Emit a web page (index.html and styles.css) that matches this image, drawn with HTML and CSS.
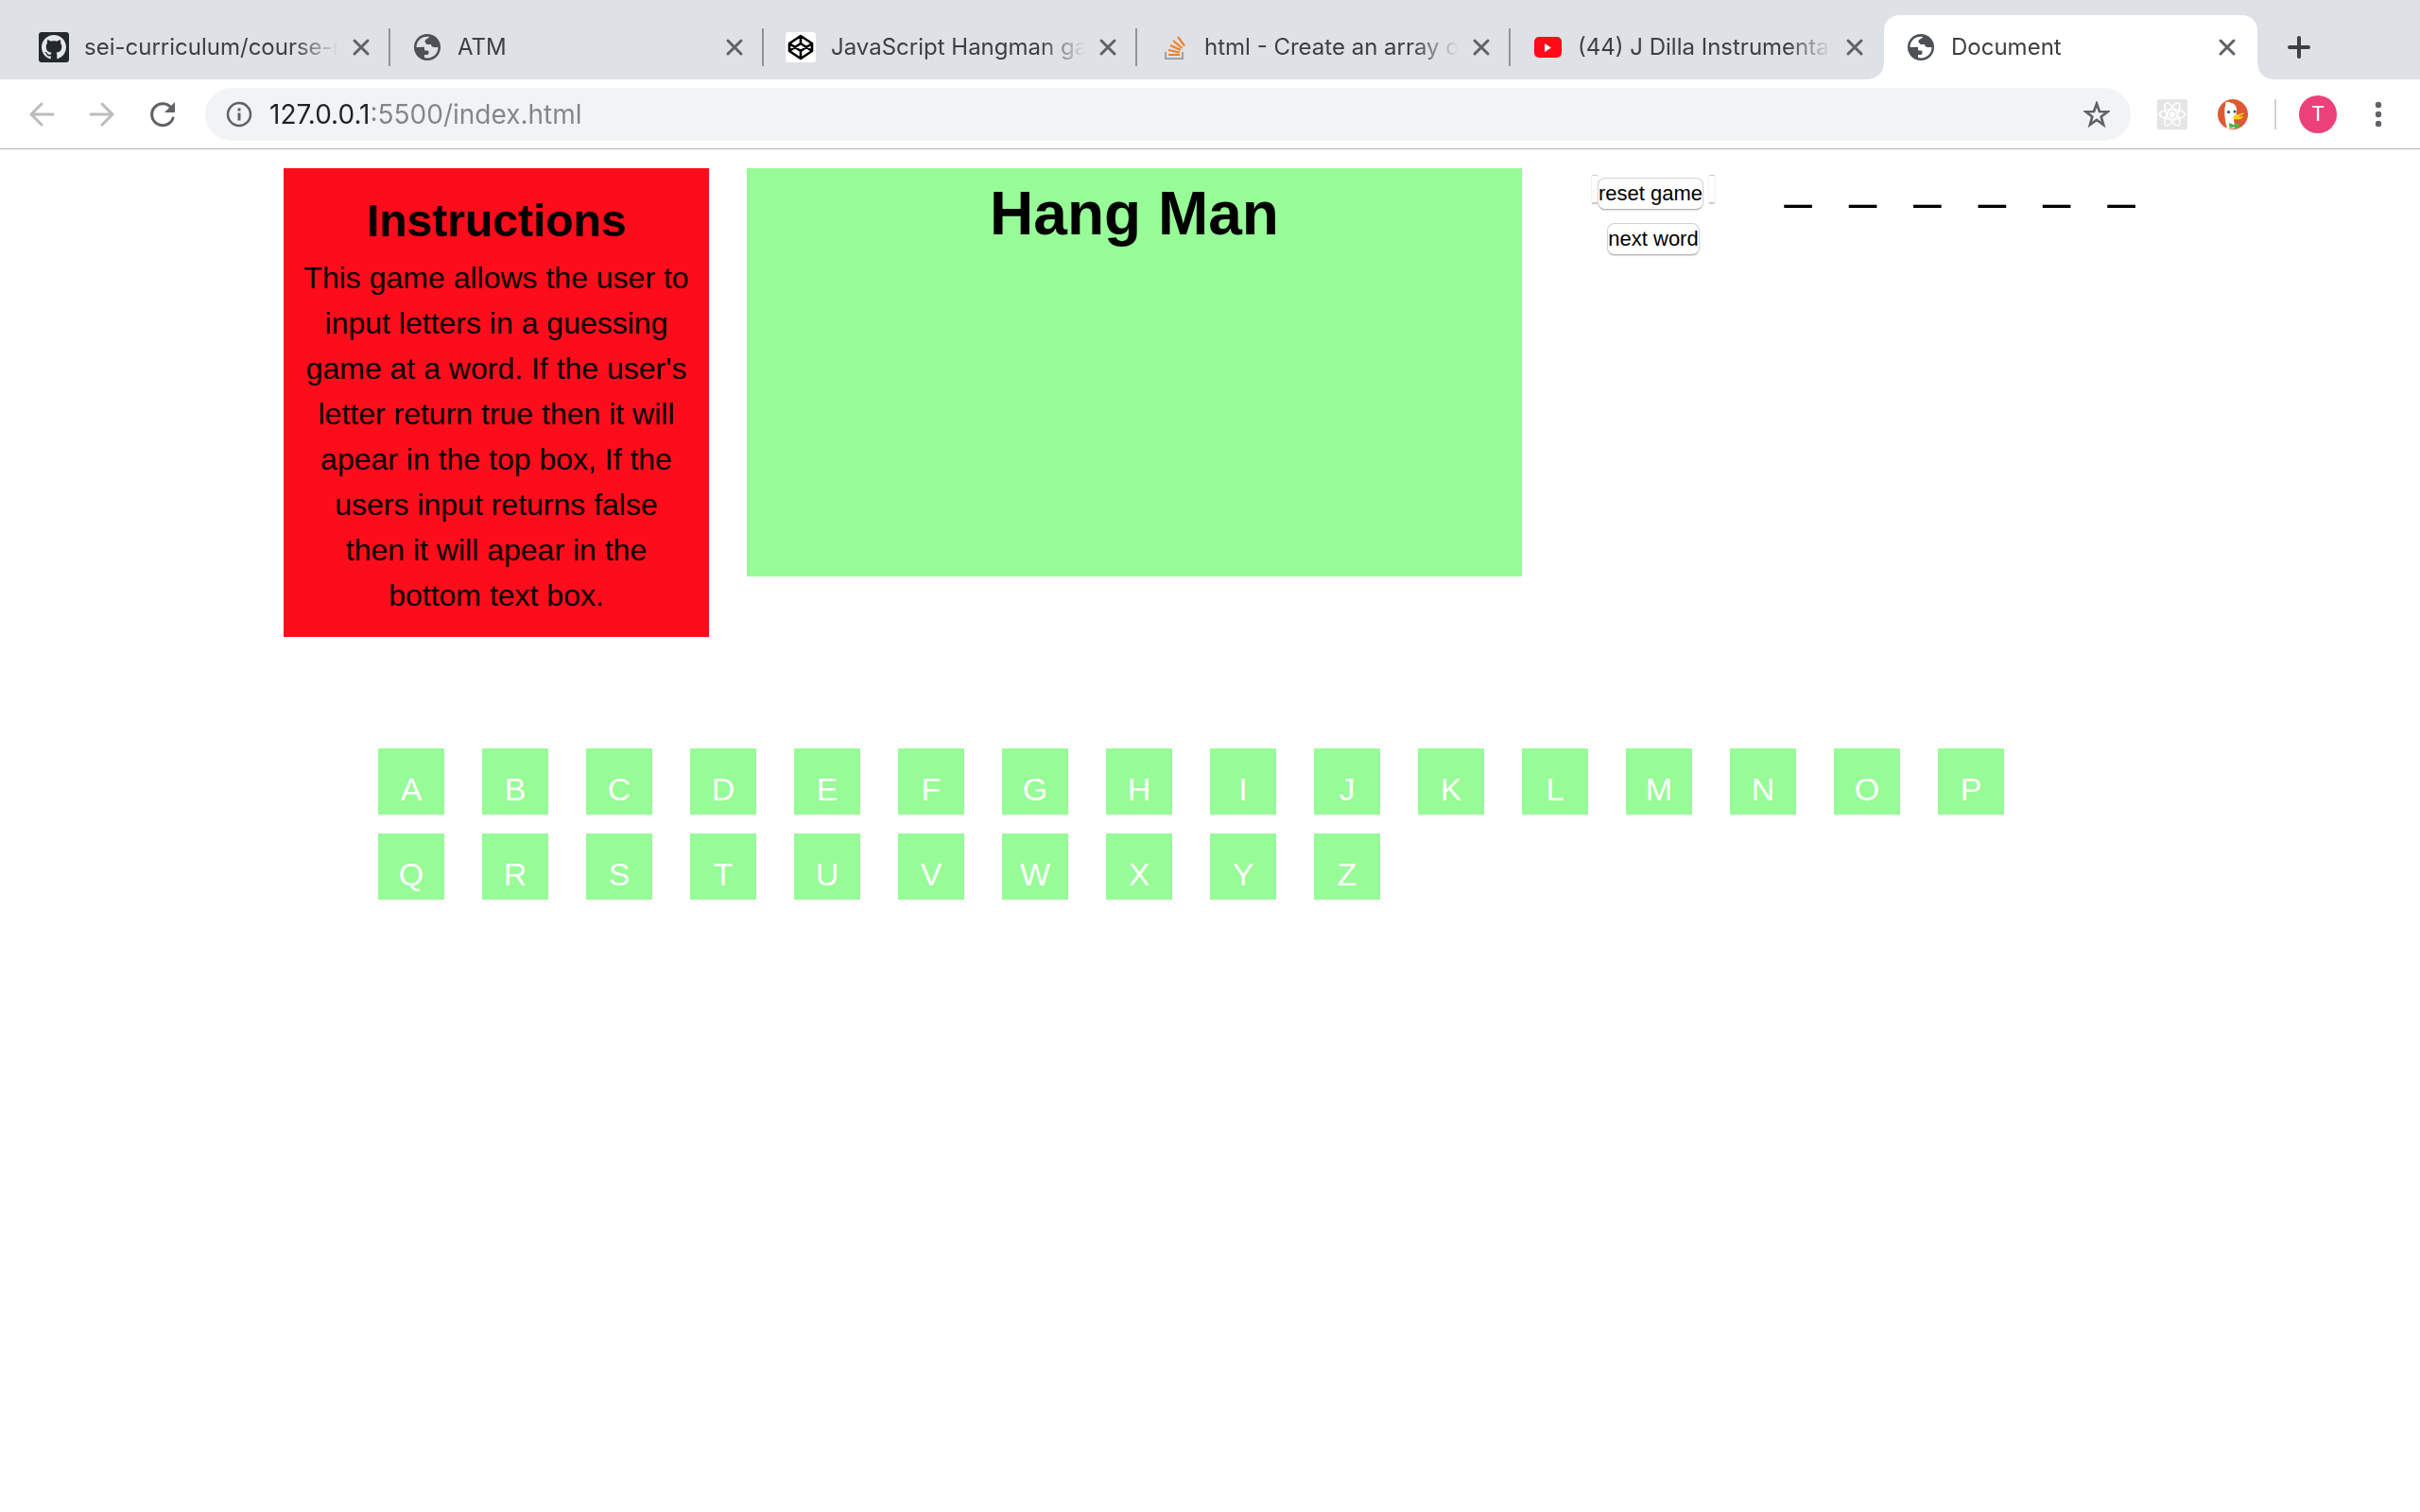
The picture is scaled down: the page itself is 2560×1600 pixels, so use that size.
FILE: index.html
```html
<!DOCTYPE html>
<html lang="en">
<head>
<meta charset="utf-8">
<title>Document</title>
<link rel="stylesheet" href="styles.css">
</head>
<body>
<svg class="defs" aria-hidden="true">
  <symbol id="close" viewBox="0 0 24 24"><path d="M5 5l14 14M19 5L5 19" fill="none" stroke="currentColor" stroke-width="3" stroke-linecap="round"/></symbol>
  <symbol id="globe" viewBox="0 0 32 32">
    <circle cx="16" cy="16" r="14" fill="#4d5156"/>
    <path class="land" d="M4.500 16C4.500 9.500 9.500 4.700 16 4.700h2C18 7 14 7 13.500 9.500c-.3 2 1.500 1.800 2 3.500h4.500c0 2 1.500 3 3.500 3h4c0 6.500-5 11.500-11.500 11.500-1 0-2-.1-3-.4V24h2.500c2 0 2-1.500 2-4-1.500-.6-3-.8-4.500-.8V15.800z"/>
  </symbol>
</svg>
<header class="browser">
  <nav class="tabs" aria-label="Tabs">
    <div class="tab">
      <svg class="icon" viewBox="0 0 32 32"><rect width="32" height="32" rx="3" fill="#24292e"/><g transform="translate(3 3) scale(1.625)"><path fill="#e6e7e9" d="M8 0C3.580 0 0 3.580 0 8c0 3.540 2.290 6.530 5.470 7.590.4.070.55-.17.55-.38 0-.19-.01-.82-.01-1.490-2.010.37-2.530-.49-2.690-.94-.09-.23-.48-.94-.82-1.130-.28-.15-.68-.52-.01-.53.63-.01 1.080.58 1.230.82.72 1.210 1.870.87 2.330.66.070-.52.28-.87.51-1.070-1.780-.2-3.640-.89-3.640-3.950 0-.87.31-1.590.82-2.150-.08-.2-.36-1.020.08-2.120 0 0 .67-.21 2.200.82.64-.18 1.320-.27 2-.27s1.360.09 2 .27c1.530-1.040 2.200-.82 2.200-.82.44 1.100.16 1.920.08 2.120.51.56.82 1.270.82 2.150 0 3.070-1.870 3.750-3.650 3.950.29.25.54.73.54 1.480 0 1.070-.01 1.930-.01 2.200 0 .21.15.46.55.38A8.010 8.010 0 0 0 16 8c0-4.420-3.580-8-8-8z"/></g></svg>
      <span class="title">sei-curriculum/course-materials</span>
      <button class="close" aria-label="Close tab"><svg><use href="#close"/></svg></button>
    </div>
    <div class="tab">
      <svg class="icon"><use href="#globe"/></svg>
      <span class="title">ATM</span>
      <button class="close" aria-label="Close tab"><svg><use href="#close"/></svg></button>
    </div>
    <div class="tab">
      <svg class="icon" viewBox="0 0 32 32"><rect width="32" height="32" rx="3" fill="#fff"/><path fill="none" stroke="#000" stroke-width="2.600" stroke-linejoin="round" d="M16 4L28 12v8L16 28 4 20v-8zM16 4v8M16 20v8M4 12l12 8 12-8M4 20l12-8 12 8"/></svg>
      <span class="title">JavaScript Hangman game</span>
      <button class="close" aria-label="Close tab"><svg><use href="#close"/></svg></button>
    </div>
    <div class="tab">
      <svg class="icon" viewBox="0 0 32 32"><path d="M7 21v7h18v-7" fill="none" stroke="#9fa3a8" stroke-width="2"/><path d="M10 24h12M10 19l12 2.500M12 14l11 5M15 9l9.500 8M20 5l7 9.500" fill="none" stroke="#f48024" stroke-width="2.200"/></svg>
      <span class="title">html - Create an array of buttons</span>
      <button class="close" aria-label="Close tab"><svg><use href="#close"/></svg></button>
    </div>
    <div class="tab">
      <svg class="icon" viewBox="0 0 32 32"><rect x="2" y="5" width="29" height="22" rx="5" fill="#ff0a17"/><path d="M13 12v9l7-4.500z" fill="#fff"/></svg>
      <span class="title">(44) J Dilla Instrumentals</span>
      <button class="close" aria-label="Close tab"><svg><use href="#close"/></svg></button>
    </div>
    <div class="tab active">
      <svg class="icon"><use href="#globe"/></svg>
      <span class="title">Document</span>
      <button class="close" aria-label="Close tab"><svg><use href="#close"/></svg></button>
    </div>
    <button class="new-tab" aria-label="New tab"><svg viewBox="0 0 28 28"><path d="M14 4v20M4 14h20" fill="none" stroke="#3c4043" stroke-width="4" stroke-linecap="round"/></svg></button>
  </nav>
  <div class="toolbar">
    <button class="tool dim" aria-label="Back"><svg viewBox="0 0 32 32"><path d="M28 16H5M16 5L5 16l11 11"/></svg></button>
    <button class="tool dim" aria-label="Forward"><svg viewBox="0 0 32 32"><path d="M4 16h23M16 5l11 11-11 11"/></svg></button>
    <button class="tool" aria-label="Reload"><svg viewBox="0 0 32 32"><path d="M25.500 9.500A11.500 11.500 0 1 0 27 20"/><path d="M29 3v11H18z" fill="currentColor" stroke="none"/></svg></button>
    <div class="omnibox">
      <button class="glyph" aria-label="Site information"><svg viewBox="0 0 28 28"><circle cx="14" cy="14" r="12" fill="none" stroke="#5f6368" stroke-width="2.500"/><path d="M14 12.500v8M14 7.500v3" stroke="#5f6368" stroke-width="3"/></svg></button>
      <input class="url" type="text" aria-label="Address" value="127.0.0.1:5500/index.html">
      <button class="glyph" aria-label="Bookmark this page"><svg viewBox="0 0 28 28"><path d="M14 2.800l2.900 8.200 8.600.2-6.800 5.300 2.400 8.500-7.100-5-7.100 5 2.400-8.500-6.800-5.300 8.600-.2z" fill="none" stroke="#5f6368" stroke-width="2.700"/></svg></button>
    </div>
    <button class="ext" aria-label="React"><svg viewBox="0 0 32 32"><rect width="32" height="32" rx="2" fill="#e5e5e5"/><g fill="none" stroke="#fff" stroke-width="1.500"><ellipse cx="16" cy="16" rx="13.500" ry="5"/><ellipse cx="16" cy="16" rx="13.500" ry="5" transform="rotate(60 16 16)"/><ellipse cx="16" cy="16" rx="13.500" ry="5" transform="rotate(120 16 16)"/></g><circle cx="16" cy="16" r="3" fill="#fff"/></svg></button>
    <button class="ext" aria-label="DuckDuckGo"><svg viewBox="0 0 32 32"><circle cx="16" cy="16" r="16" fill="#de5833"/><path fill="#fff" d="M10 31C8 24 7 18 7.300 11 7.500 7 9 6 8 4c1-2 4-1.500 6-.3 4 .8 6 4 6.200 8.300l-1 6-2.200 4 1.500 8.500c-3 .8-5.500.8-8.500.5z"/><circle cx="11.500" cy="13.500" r="1.600" fill="#2d4f8e"/><circle cx="18" cy="13" r="1.500" fill="#2d4f8e"/><path fill="#fdd20a" d="M16 19c1-2 3-2.500 5-2.800 2-.3 4-1.500 7-1.700-1 2-4 2.600-6 3.600 2 .8 4 .2 5.500 0-2 3.500-5 3.300-8 3.200-2 0-3.500-.8-3.500-2.300z"/><path fill="#4cb749" d="M12 25l5 2 5.500-2v6L17 29.500 12.500 31z"/></svg></button>
    <span class="rule"></span>
    <button class="avatar" aria-label="Profile">T</button>
    <button class="menu" aria-label="Menu"><svg viewBox="0 0 8 28"><circle cx="4" cy="4" r="3.200"/><circle cx="4" cy="14" r="3.200"/><circle cx="4" cy="24" r="3.200"/></svg></button>
  </div>
</header>
<main class="page">
  <div class="board">
    <section class="instructions">
      <h2>Instructions</h2>
      <p>This game allows the user to input letters in a guessing game at a word. If the user's letter return true then it will apear in the top box, If the users input returns false then it will apear in the bottom text box.</p>
    </section>
    <section class="stage"><h1>Hang Man</h1></section>
    <div class="actions">
      <div class="slot"><button class="push">reset game</button></div>
      <button class="push">next word</button>
    </div>
    <div class="word"><span>_</span><span>_</span><span>_</span><span>_</span><span>_</span><span>_</span></div>
  </div>
  <div class="letters">
    <button>A</button><button>B</button><button>C</button><button>D</button><button>E</button><button>F</button><button>G</button><button>H</button><button>I</button><button>J</button><button>K</button><button>L</button><button>M</button><button>N</button><button>O</button><button>P</button><button>Q</button><button>R</button><button>S</button><button>T</button><button>U</button><button>V</button><button>W</button><button>X</button><button>Y</button><button>Z</button>
  </div>
</main>
</body>
</html>
```
FILE: styles.css
```css
* { box-sizing: border-box; }
body {
  margin: 0;
  background: #fff;
  color: #000;
  font-family: "Liberation Sans", Arial, sans-serif;
}
button {
  margin: 0;
  padding: 0;
  border: 0;
  background: none;
  color: inherit;
  font: inherit;
}
svg { display: block; }
h1, h2, p { margin: 0; }
.defs { display: none; }

/* Browser chrome */
.browser {
  font-family: Inter, "Noto Sans", sans-serif;
  border-bottom: 1px solid #b0b2b5;
}
.tabs {
  display: flex;
  align-items: flex-end;
  height: 84px;
  padding-left: 18px;
  background: #dee1e6;
}
.tab {
  position: relative;
  flex: 0 1 395px;
  min-width: 0;
  height: 68px;
  display: flex;
  align-items: center;
  gap: 12px;
  padding: 0 20px 0 23px;
  color: #3c4043;
  --land: #dee1e6;
}
.tab:not(.active)::after {
  content: "";
  width: 2px;
  height: 40px;
  background: #8f9397;
  margin: 0 -20px 0 5px;
}
.tab:has(+ .active)::after { visibility: hidden; }
.tab.active {
  background: #fff;
  border-radius: 16px 16px 0 0;
  --land: #fff;
}
.tab.active::before,
.tab.active::after {
  content: "";
  position: absolute;
  bottom: 0;
  width: 16px;
  height: 16px;
}
.tab.active::before {
  right: 100%;
  background: radial-gradient(circle at 0 0, transparent 15px, #fff 16px);
}
.tab.active::after {
  left: 100%;
  margin: 0;
  background: radial-gradient(circle at 100% 0, transparent 15px, #fff 16px);
}
.icon { flex: none; width: 32px; height: 32px; }
.land { fill: var(--land); }
.title {
  flex: 1;
  min-width: 0;
  margin-left: 4px;
  overflow: hidden;
  white-space: nowrap;
  font-size: 24px;
  line-height: 32px;
  -webkit-mask-image: linear-gradient(to left, transparent, #000 48px);
  mask-image: linear-gradient(to left, transparent, #000 48px);
}
.close { flex: none; color: #5f6368; }
.close svg { width: 24px; height: 24px; }
.new-tab { margin-left: 30px; padding-bottom: 20px; }
.new-tab svg { width: 28px; height: 28px; }
.toolbar {
  display: flex;
  align-items: center;
  height: 73px;
  padding: 0 40px 0 28px;
}
.tool { color: #5f6368; margin-right: 32px; }
.tool.dim { color: #babcbe; }
.tool:last-of-type { margin-right: 28px; }
.tool svg {
  width: 32px;
  height: 32px;
  fill: none;
  stroke: currentColor;
  stroke-width: 3;
  stroke-linecap: round;
}
.omnibox {
  flex: 1;
  display: flex;
  align-items: center;
  gap: 18px;
  height: 56px;
  margin: 0 28px 0 -3px;
  padding: 0 22px;
  border-radius: 28px;
  background: #f1f3f4;
}
.glyph svg { width: 28px; height: 28px; }
.url {
  flex: 1;
  min-width: 0;
  padding: 0;
  border: 0;
  outline: 0;
  font: 28px/36px Inter, "Noto Sans", sans-serif;
  color: #80868b;
  background: linear-gradient(to right, #202124 108px, #80868b 108px);
  -webkit-background-clip: text;
  background-clip: text;
  -webkit-text-fill-color: transparent;
}
.ext { margin-right: 32px; }
.ext svg { width: 32px; height: 32px; }
.rule { width: 2px; height: 32px; margin: 0 24px 0 -4px; background: #cfd1d3; }
.avatar {
  width: 40px;
  height: 40px;
  margin-right: 40px;
  border-radius: 50%;
  background: #ec407a;
  color: #fff;
  font-family: Roboto, sans-serif;
  font-size: 22px;
}
.menu svg { width: 8px; height: 28px; fill: #5f6368; }

/* Game */
.page {
  max-width: 2000px;
  margin: 0 auto;
  padding: 20px;
  font-size: 32px;
  line-height: 48px;
}
.board {
  display: grid;
  grid-template-columns: 450fr 820fr 198fr 372fr;
  gap: 40px;
  align-items: start;
}
.instructions {
  padding: 20px;
  background: #fd0d1b;
  text-align: center;
}
.instructions h2 { font-size: 48px; line-height: 72px; }
.stage {
  min-height: 432px;
  background: #97fb97;
  text-align: center;
}
.stage h1 { font-size: 64px; line-height: 96px; }
.actions {
  display: flex;
  flex-direction: column;
  align-items: center;
  gap: 14px;
  padding-top: 7px;
}
.slot {
  display: flex;
  align-items: flex-start;
  width: 132px;
}
.slot::before,
.slot::after {
  content: "";
  width: 6px;
  height: 28px;
  border: 1px solid #f4f4f4;
  border-top-color: #ccc;
  border-bottom: 2px solid #ccc;
  border-radius: 2px;
}
.slot::after { margin-left: auto; }
.slot .push { margin: 3px 0 0 -1px; }
.push {
  height: 34px;
  border: 1px solid #d2d2d2;
  border-bottom-color: #b4b4b4;
  border-radius: 8px;
  background: #fff;
  box-shadow: 0 1px 1px #ddd;
  font-size: 22px;
  line-height: 32px;
  white-space: nowrap;
}
.word {
  display: flex;
  gap: 40px;
  font-size: 51px;
  line-height: 30px;
}
.letters {
  display: flex;
  flex-wrap: wrap;
  gap: 20px 40px;
  padding: 118px 60px 0 100px;
}
.letters button {
  width: 70px;
  height: 70px;
  padding-top: 16px;
  background: #97fb97;
  color: #fff;
  font-size: 34px;
  line-height: 46px;
}
```
